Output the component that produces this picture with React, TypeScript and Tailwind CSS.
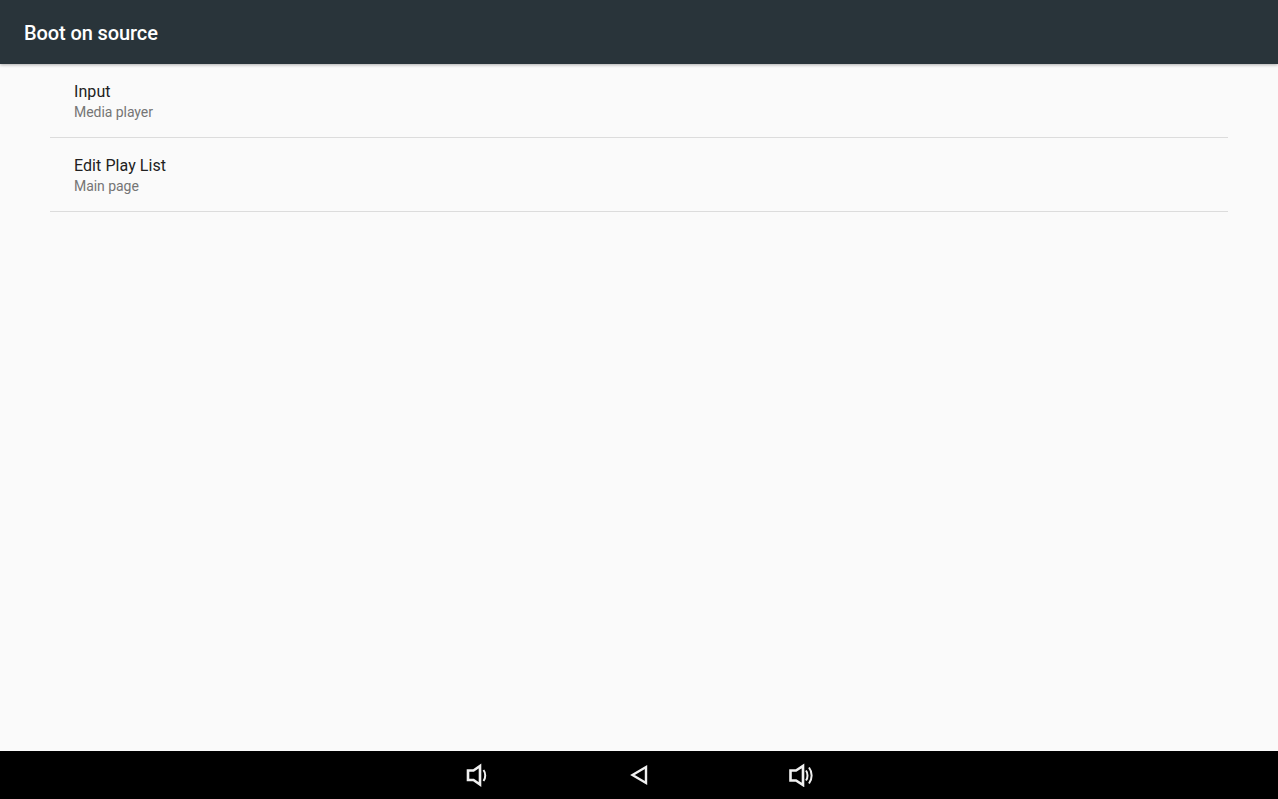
const rows = [
  { title: 'Input', summary: 'Media player' },
  { title: 'Edit Play List', summary: 'Main page' },
]

function VolumeDownIcon() {
  return (
    <svg width="24" height="24" viewBox="0 0 24 24" fill="none" stroke="#f0f0f0" strokeWidth="2.6">
      <path d="M3 7.5H8.5L15 3V21.5L8.5 17H3Z" strokeLinejoin="miter" />
      <path d="M18.5 7C20.8 10 20.8 15 18.5 18" strokeWidth="2" />
    </svg>
  )
}

function BackIcon() {
  return (
    <svg width="24" height="24" viewBox="0 0 24 24" fill="none" stroke="#f0f0f0" strokeWidth="2.4">
      <path d="M19 4V20L5.5 12Z" strokeLinejoin="miter" />
    </svg>
  )
}

function VolumeUpIcon() {
  return (
    <svg width="26" height="24" viewBox="0 0 26 24" fill="none" stroke="#f0f0f0" strokeWidth="2.6">
      <path d="M2.5 7.5H8L15 3V22L8 17.5H2.5Z" strokeLinejoin="miter" />
      <path d="M18 7.5C20 10 20 15 18 17.5" strokeWidth="2" />
      <path d="M21 4.5C24.5 9 24.5 16 21 20.5" strokeWidth="2" />
    </svg>
  )
}

export default function App() {
  return (
    <div className="flex h-[799px] flex-col overflow-hidden bg-[#fafafa] font-['Roboto',sans-serif]">
      <header className="z-10 flex h-16 shrink-0 items-center bg-[#29343a] px-6 pt-[2px] shadow-[0_1px_3px_rgba(0,0,0,0.3)]">
        <h1 className="text-xl font-medium tracking-[-0.1px] text-white">Boot on source</h1>
      </header>
      <main className="flex-1 px-[50px]">
        <ul>
          {rows.map((row) => (
            <li key={row.title} className="flex h-[74px] flex-col justify-center border-b border-[#dcdcdc] px-6">
              <div className="text-base leading-[22px] tracking-[0.07px] text-[#212121]">{row.title}</div>
              <div className="text-sm leading-[18px] tracking-[-0.05px] text-[#757575]">{row.summary}</div>
            </li>
          ))}
        </ul>
      </main>
      <nav className="flex h-12 shrink-0 items-center justify-center bg-black">
        <button className="flex w-[162px] justify-center"><VolumeDownIcon /></button>
        <button className="flex w-[162px] justify-center"><BackIcon /></button>
        <button className="flex w-[162px] justify-center"><VolumeUpIcon /></button>
      </nav>
    </div>
  )
}
